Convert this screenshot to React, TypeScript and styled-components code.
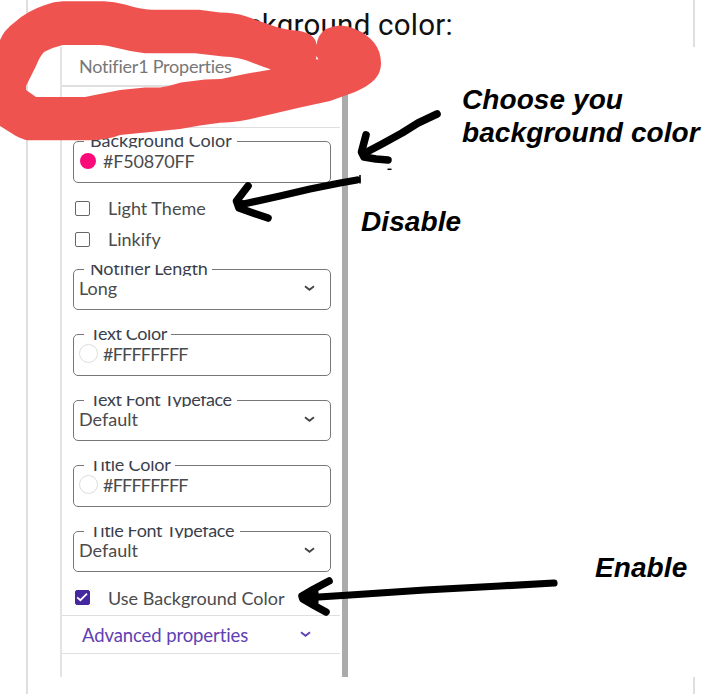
import React from 'react';
import styled, { createGlobalStyle } from 'styled-components';

const colors = {
  text: '#4b4b4b',
  muted: '#777777',
  outline: '#777777',
  divider: '#dfdfdf',
  accent: '#4527a0',
  marker: '#ef5350',
};

const GlobalStyle = createGlobalStyle`
  * {
    box-sizing: border-box;
  }
  body {
    margin: 0;
    background: #ffffff;
  }
`;

const Page = styled.div`
  position: relative;
  width: 720px;
  height: 694px;
  overflow: hidden;
  padding-left: 26px;
  background: #ffffff;
`;

const Post = styled.div`
  height: 694px;
  border-left: 2px solid ${colors.divider};
`;

const PostEdge = styled.div<{ $height: number }>`
  width: 667px;
  height: ${({ $height }) => $height}px;
  border-right: 2px solid ${colors.divider};
`;

const PostTitle = styled.p`
  margin: 0;
  padding-top: 7px;
  width: 425px;
  text-align: right;
  font-family: Roboto, sans-serif;
  font-size: 29.5px;
  letter-spacing: 0.25px;
  line-height: 36px;
  color: #111111;
`;

const Figure = styled.div`
  display: flex;
  height: 630px;
  padding-left: 32px;
`;

const Panel = styled.section`
  width: 282px;
  border-left: 2px solid #e4e4e4;
  font-family: Lato, sans-serif;
  color: ${colors.text};
`;

const PanelHeader = styled.h2`
  margin: 0;
  height: 40px;
  padding-left: 17px;
  border-bottom: 2px solid ${colors.divider};
  font-size: 18px;
  font-weight: 400;
  letter-spacing: -0.23px;
  line-height: 38px;
  color: ${colors.muted};
`;

const PanelGap = styled.div`
  height: 41px;
  width: 278px;
  border-bottom: 1px solid ${colors.divider};
`;

const Fields = styled.div`
  height: 487px;
  padding: 13px 12px 0 11px;
`;

const Field = styled.div`
  position: relative;
  display: flex;
  align-items: center;
  height: 41.5px;
  width: 258px;
  margin-bottom: 24px;
  padding: 0 15px 2px 5px;
  border: 1.5px solid ${colors.outline};
  border-radius: 5px;
  font-size: 18px;
`;

// The legend box is shorter than its text, so ascenders and descenders are cut off
const Legend = styled.span<{ $width: number; $spacing: number }>`
  position: absolute;
  top: -5px;
  left: 10px;
  width: ${({ $width }) => $width}px;
  height: 11px;
  padding-left: 6px;
  overflow: hidden;
  background: #ffffff;
  line-height: 7px;
  font-size: 18px;
  letter-spacing: ${({ $spacing }) => $spacing}px;
  white-space: nowrap;
  color: #3b3f4c;
`;

const Value = styled.span<{ $spacing?: number }>`
  flex: 1;
  line-height: 22px;
  letter-spacing: ${({ $spacing = 0 }) => $spacing}px;
`;

const Swatch = styled.span<{ $color: string; $outlined?: boolean }>`
  width: ${({ $outlined }) => ($outlined ? 19 : 16)}px;
  height: ${({ $outlined }) => ($outlined ? 19 : 16)}px;
  margin: ${({ $outlined }) => ($outlined ? '0 5px 0 0' : '0 7px 0 1px')};
  border: ${({ $outlined }) => ($outlined ? '1px solid #dddddd' : 'none')};
  border-radius: 50%;
  background: ${({ $color }) => $color};
`;

const Checks = styled.div`
  margin-top: -14px;
  margin-bottom: 14px;
`;

const CheckRow = styled.div`
  display: flex;
  align-items: center;
  height: 31px;
  padding-left: 2px;
  font-size: 18px;
  line-height: 22px;
`;

const CheckBox = styled.span<{ $checked?: boolean }>`
  display: flex;
  width: 15px;
  height: 15px;
  margin-right: 18px;
  border: 1.5px solid ${({ $checked }) => ($checked ? colors.accent : '#666666')};
  border-radius: 2px;
  background: ${({ $checked }) => ($checked ? colors.accent : '#ffffff')};
`;

const Advanced = styled.div`
  display: flex;
  align-items: center;
  justify-content: space-between;
  width: 278px;
  height: 39px;
  padding: 0 29px 0 20px;
  border-top: 1px solid ${colors.divider};
  border-bottom: 1px solid ${colors.divider};
  font-size: 18.5px;
  letter-spacing: -0.1px;
  color: #6040b4;
`;

const ScrollBar = styled.div`
  width: 6px;
  background: #ababab;
`;

const Notes = styled.div`
  flex: 1;
  padding-top: 36px;
  padding-left: 13px;
`;

const Note = styled.p<{ $indent?: number; $gap?: number }>`
  margin: ${({ $gap = 0 }) => $gap}px 0 0 ${({ $indent = 0 }) => $indent}px;
  font-family: 'Liberation Sans', Arial, sans-serif;
  font-size: 28px;
  font-weight: 700;
  font-style: italic;
  letter-spacing: 0.08px;
  line-height: 33px;
  white-space: nowrap;
  color: #000000;
`;

const Drawing = styled.svg`
  position: absolute;
  top: 0;
  left: 0;
  pointer-events: none;
`;

const Chevron = ({ color = '#444444' }: { color?: string }) => (
  <svg width="11" height="7" viewBox="0 0 11 7" fill="none" stroke={color} strokeWidth="1.8">
    <path d="M1 1.2 5.5 4.8 10 1.2" />
  </svg>
);

const Tick = () => (
  <svg width="12" height="12" viewBox="0 0 12 12" fill="none" stroke="#ffffff" strokeWidth="1.8">
    <path d="M1.2 6.3 4.4 9.2 11 2.6" />
  </svg>
);

type PropertyFieldProps = {
  label: string;
  legendWidth: number;
  spacing?: number;
  value: string;
  valueSpacing?: number;
  swatch?: string;
  select?: boolean;
};

const PropertyField = ({ label, legendWidth, spacing = 0, value, valueSpacing, swatch, select }: PropertyFieldProps) => (
  <Field>
    <Legend $width={legendWidth} $spacing={spacing}>{label}</Legend>
    {swatch && <Swatch $color={swatch} $outlined={swatch === '#ffffff'} />}
    <Value $spacing={valueSpacing}>{value}</Value>
    {select && <Chevron />}
  </Field>
);

const Scribble = () => (
  <path
    fill={colors.marker}
    fillRule="evenodd"
    d="M0 40 Q4 30 15 22 Q27 11 45 5 Q54 1.5 63 1.3 H104 Q114 1.5 125 4.5 Q141 9.5 151 9.7 H199 L220 12.6 Q235 12.8 245 16 L275 26.5 Q285 30 299 30.7 Q316 34 316.5 45 Q318 34 326 29 Q341 22 355 29 C372 36 381 48 381 63 C381 76 373 84 355 92 L330 101 L300 107.5 L255 118 Q240 122 220 122.7 L200 125.5 L180 129 L150 132 L120 135 Q108 140 90 140.3 H28 Q24 140 16 136 L0 126 Z
      M63 45 Q52 47.5 44 52 Q40 56 36 66 L26 86 V90 L36 97 H85 L120 90 L145 87.5 H160 Q170 86 181 82.5 L205 79.5 L221 79 L245 74 L271 69.5 Q260 66 252 62.5 Q239 57 223 56.5 L195 53.3 H145 Q130 51.5 115 47.5 Q107 45 100 45 Z
      M316.6 56 L315.8 59.2 L318.5 59.5 Z"
  />
);

const Arrows = () => (
  <g fill="none" stroke="#000000" strokeWidth="7.6" strokeLinecap="round" strokeLinejoin="round">
    <path d="M437 114 L418 123 L402 133 L382 144 L363 154" />
    <path d="M366 135 L361.5 152 L364 157 L376 159 L388 160" />
    <path d="M357 180 L340 183 L310 189 L280 196 L239 205" strokeWidth="7.2" />
    <path d="M360 175 V183.5" strokeWidth="1.6" strokeLinecap="butt" />
    <path d="M248 186 L236.5 201 L239 208 L253 213 L268 218" />
    <path d="M239 201 L250 203 L240 208 Z" fill="#000000" strokeWidth="3" />
    <path d="M554 583 L500 586 L425 590 L350 595 L303 598" strokeWidth="7.2" />
    <path d="M329 581 L314 589 L302 596 L303 599 L315 606 L326 612" />
    <path d="M304 596 L317 592 L317 603 Z" fill="#000000" strokeWidth="3" />
    <path d="M387.5 169.3 H391.5" strokeWidth="1.5" strokeLinecap="butt" />
  </g>
);

const App = () => (
  <>
    <GlobalStyle />
    <Page>
      <Post>
        <PostEdge $height={47}>
          <PostTitle>background color:</PostTitle>
        </PostEdge>
        <Figure>
          <Panel>
            <PanelHeader>Notifier1 Properties</PanelHeader>
            <PanelGap />
            <Fields>
              <PropertyField
                label="Background Color"
                legendWidth={153}
                value="#F50870FF"
                valueSpacing={-0.2}
                swatch="#fa0a78"
              />
              <Checks>
                <CheckRow>
                  <CheckBox />
                  Light Theme
                </CheckRow>
                <CheckRow>
                  <CheckBox />
                  Linkify
                </CheckRow>
              </Checks>
              <PropertyField label="Notifier Length" legendWidth={128} spacing={-0.1} value="Long" select />
              <PropertyField
                label="Text Color"
                legendWidth={87}
                spacing={-0.4}
                value="#FFFFFFFF"
                valueSpacing={-0.8}
                swatch="#ffffff"
              />
              <PropertyField label="Text Font Typeface" legendWidth={153} spacing={-0.4} value="Default" select />
              <PropertyField
                label="Title Color"
                legendWidth={91}
                spacing={-0.2}
                value="#FFFFFFFF"
                valueSpacing={-0.8}
                swatch="#ffffff"
              />
              <PropertyField label="Title Font Typeface" legendWidth={156} spacing={-0.35} value="Default" select />
              <Checks>
                <CheckRow>
                  <CheckBox $checked>
                    <Tick />
                  </CheckBox>
                  Use Background Color
                </CheckRow>
              </Checks>
            </Fields>
            <Advanced>
              Advanced properties
              <Chevron color="#6040b4" />
            </Advanced>
          </Panel>
          <ScrollBar />
          <Notes>
            <Note $indent={101}>Choose you</Note>
            <Note $indent={101}>background color</Note>
            <Note $gap={56}>Disable</Note>
            <Note $indent={234} $gap={313}>Enable</Note>
          </Notes>
        </Figure>
        <PostEdge $height={17} />
      </Post>
      <Drawing width="720" height="694" viewBox="0 0 720 694">
        <Scribble />
        <Arrows />
      </Drawing>
    </Page>
  </>
);

export default App;
